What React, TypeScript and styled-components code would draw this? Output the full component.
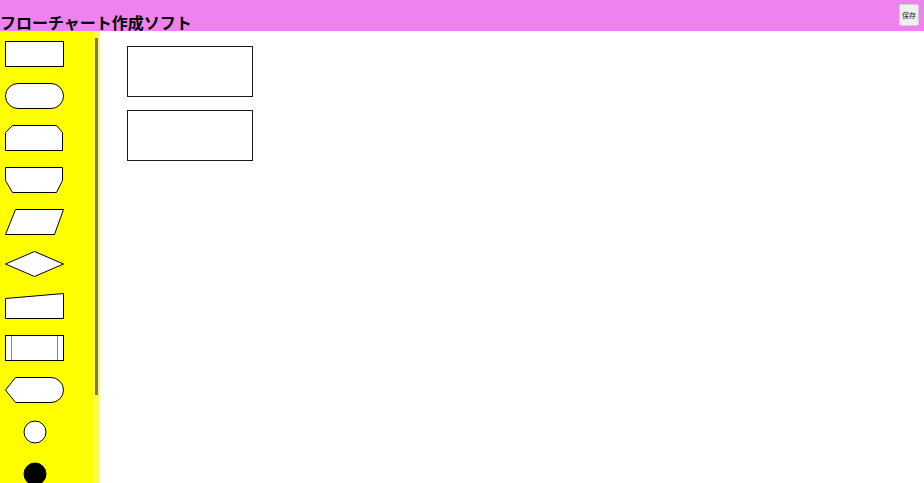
import styled, { createGlobalStyle } from "styled-components";

const GlobalStyle = createGlobalStyle`
  html, body {
    margin: 0;
    padding: 0;
    height: 100%;
  }
  body {
    font-family: "Noto Sans CJK JP", "Noto Sans", sans-serif;
    color: #000;
  }
  #root {
    height: 100%;
  }
`;

const Page = styled.div`
  display: flex;
  flex-direction: column;
  height: 100vh;
  overflow: hidden;
`;

const Header = styled.header`
  display: flex;
  justify-content: space-between;
  align-items: flex-end;
  height: 31px;
  flex: 0 0 31px;
  background: #ee82ee;
`;

const Title = styled.h1`
  margin: 0;
  font-size: 16px;
  font-weight: bold;
  line-height: 18px;
`;

const SaveButton = styled.button`
  align-self: flex-start;
  margin: 4px 5px 0 0;
  width: 20px;
  height: 22px;
  padding: 0;
  font-family: "Noto Sans CJK JP", sans-serif;
  font-size: 7px;
  color: #222;
  background: #efefef;
  border: 1px solid #d0d0d0;
  border-radius: 2px;
`;

const Body = styled.div`
  display: flex;
  flex: 1;
  min-height: 0;
`;

const Palette = styled.aside`
  width: 100px;
  flex: 0 0 100px;
  display: flex;
  background: #ffff00;
  overflow: hidden;
`;

const PaletteList = styled.div`
  flex: 1;
  box-sizing: border-box;
  padding: 10px 0 24px 5px;
  display: flex;
  flex-direction: column;
  gap: 16px;
`;

const ScrollTrack = styled.div`
  flex: 0 0 7px;
  box-sizing: border-box;
  padding: 7px 2px 0;
  background: #ffff4a;
`;

const ScrollThumb = styled.div`
  width: 3px;
  height: 357px;
  background: #787878;
`;

const PaletteItem = styled.div`
  flex: 0 0 26px;
  height: 26px;
  width: 60px;
  cursor: grab;

  svg {
    display: block;
  }
`;

const Canvas = styled.main`
  position: relative;
  flex: 1;
  background: #fff;
`;

const Node = styled.div<{ $x: number; $y: number }>`
  position: absolute;
  left: ${(p) => p.$x}px;
  top: ${(p) => p.$y}px;
  width: 126px;
  height: 51px;
  box-sizing: border-box;
  border: 1px solid #1a1a1a;
  background: #fff;
`;

const S = { fill: "#fff", stroke: "#000", strokeWidth: 1 };

const shapes: React.ReactNode[] = [
  <rect key="r" x={0.5} y={0.5} width={58} height={25} {...S} />,
  <rect key="t" x={0.5} y={0.5} width={58} height={25} rx={12.5} {...S} />,
  <path key="ls" d="M7.5 .5H51.5L57.5 7.5V25.5H.5V7.5Z" {...S} />,
  <path key="le" d="M.5 .5H57.5V13.5L51.5 25.5H7.5L.5 13.5Z" {...S} />,
  <path key="pa" d="M10.5 .5H58.5L49.5 25.5H.5Z" {...S} />,
  <path key="di" d="M.5 13L29.5 .5L58.5 13L29.5 25.5Z" {...S} />,
  <path key="mi" d="M.5 5.5L58.5 .5V25.5H.5Z" {...S} />,
  <g key="pp">
    <rect x={0.5} y={0.5} width={58} height={25} {...S} />
    <line x1={6.5} y1={1} x2={6.5} y2={25} stroke="#888" />
    <line x1={52.5} y1={1} x2={52.5} y2={25} stroke="#888" />
  </g>,
  <path key="dp" d="M.5 13L10.5 .5H46A12.5 12.5 0 0 1 46 25.5H10.5Z" {...S} />,
  <circle key="c" cx={30} cy={13} r={11} {...S} />,
  <circle key="fc" cx={30} cy={13} r={11} fill="#000" stroke="#000" />,
  <line key="ln" x1={0.5} y1={13} x2={58.5} y2={13} stroke="#000" />,
  <g key="ar">
    <line x1={0.5} y1={13} x2={54} y2={13} stroke="#000" />
    <path d="M52 9L58.5 13L52 17Z" fill="#000" />
  </g>,
];

export default function App() {
  return (
    <>
      <GlobalStyle />
      <Page>
        <Header>
          <Title>フローチャート作成ソフト</Title>
          <SaveButton>保存</SaveButton>
        </Header>
        <Body>
          <Palette>
            <PaletteList>
              {shapes.map((shape, i) => (
                <PaletteItem key={i}>
                  <svg width="60" height="26" viewBox="0 0 60 26">
                    {shape}
                  </svg>
                </PaletteItem>
              ))}
            </PaletteList>
            <ScrollTrack>
              <ScrollThumb />
            </ScrollTrack>
          </Palette>
          <Canvas>
            <Node $x={27} $y={15} />
            <Node $x={27} $y={79} />
          </Canvas>
        </Body>
      </Page>
    </>
  );
}
